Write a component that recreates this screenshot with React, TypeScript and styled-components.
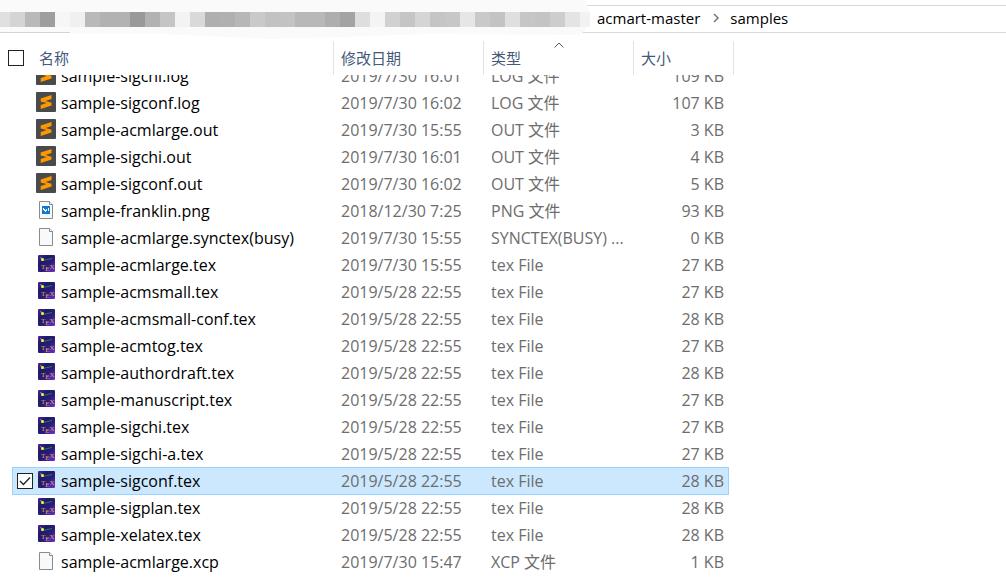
import React from "react";
import styled, { createGlobalStyle, css } from "styled-components";

const GlobalStyle = createGlobalStyle`
  * { box-sizing: border-box; }
  html, body, #root { height: 100%; }
  body {
    margin: 0;
    background: #fff;
    font-family: "Open Sans", "Noto Sans CJK SC", sans-serif;
    font-size: 15px;
    line-height: 20px;
    color: #000;
  }
`;

const Window = styled.main`
  height: 100vh;
  display: flex;
  flex-direction: column;
  overflow: hidden;
`;

const AddressBar = styled.nav`
  position: relative;
  flex: none;
  height: 28px;
  margin-top: 5px;
  display: flex;
  align-items: center;
  gap: 10px;
  padding: 0 0 2px 597px;
  border-top: 1px solid #d9d9d9;
  border-bottom: 1px solid #d9d9d9;
`;

const HiddenPath = styled.svg`
  position: absolute;
  left: 0;
  top: -6px;
`;

const Crumb = styled.a`
  color: #000;
  text-decoration: none;
`;

const FileTable = styled.table`
  flex: 1;
  min-height: 0;
  display: flex;
  flex-direction: column;
`;

const columns = css`
  display: grid;
  grid-template-columns: 322px 150px 150px 95px;
  margin-left: 12px;
`;

const Head = styled.thead`
  display: block;
  flex: none;
  padding-top: 8px;
`;

const HeadRow = styled.tr`
  ${columns}
  grid-template-columns: 322px 150px 150px 100px;
  height: 34px;
`;

const HeadCell = styled.th`
  position: relative;
  display: flex;
  align-items: center;
  padding: 0 0 0 7px;
  border-right: 1px solid #e2e2e2;
  color: #44597a;
  font-weight: 400;

  &:first-child {
    gap: 15px;
    padding-left: 0;
    margin-left: -4px;
  }
`;

const SortMark = styled.svg`
  position: absolute;
  left: 70px;
  top: 1px;
`;

const Body = styled.tbody`
  display: block;
  flex: 1;
  min-height: 0;
  overflow: hidden;
  font-size: 16px;

  tr:first-child { margin-top: -13px; }
`;

const Row = styled.tr<{ $selected: boolean }>`
  ${columns}
  width: 717px;
  height: 27px;
  ${(p) =>
    p.$selected &&
    css`
      background: #cce8ff;
      box-shadow: inset 1px 1px #99d1ff, inset -1px 0 #99d1ff, 0 1px #99d1ff;
    `}
`;

const Cell = styled.td<{ $right?: boolean }>`
  display: flex;
  align-items: center;
  justify-content: ${(p) => (p.$right ? "flex-end" : "flex-start")};
  padding: 0 5px 0 7px;
  color: #6d6d6d;
  white-space: nowrap;
`;

const NameCell = styled(Cell)`
  gap: 5px;
  padding: 0 0 0 5px;
  color: #000;
`;

const CheckSlot = styled.span`
  display: flex;
  width: 14px;
`;

const Check = styled.input`
  appearance: none;
  flex: none;
  width: 16px;
  height: 16px;
  margin: 0;
  border: 1px solid #222;
  background: #fff;

  &:checked {
    background: #fff
      url("data:image/svg+xml,%3Csvg xmlns='http://www.w3.org/2000/svg' viewBox='0 0 14 14'%3E%3Cpath d='M2 7l3.4 3.5L12 3.5' fill='none' stroke='%23222' stroke-width='1.3'/%3E%3C/svg%3E");
  }
`;

const Icon = styled.svg`
  flex: none;
  width: 20px;
  height: 21px;
  padding-bottom: 1px;
`;

type Kind = "sublime" | "image" | "page" | "tex";

const Sheet = () => (
  <>
    <path d="M3.5 1.5h10l3 3v14h-13z" fill="#f8f9f9" stroke="#8b8b8b" />
    <path d="M13.5 1.5v3h3" fill="#fff" stroke="#8b8b8b" />
  </>
);

const FileIcon = ({ kind }: { kind: Kind }) => (
  <Icon viewBox="0 0 20 20" aria-hidden="true">
    {kind === "sublime" && (
      <>
        <rect width="20" height="20" rx="1" fill="#4a4a4a" />
        <path d="M4.7 6.5 15.500 3v4L9.500 9l6 1.800v2.700L4.700 17v-4l6-2-6-1.600z" fill="#ff9800" />
      </>
    )}
    {kind === "page" && <Sheet />}
    {kind === "image" && (
      <>
        <Sheet />
        <rect x="6" y="6" width="8" height="8" fill="#0a78d4" />
        <path d="M7 8h1v1h1v1h1V9h1v1h1V8h1v3h-1v-1h-1v1h-1v1H9v-1H8v-1H7z" fill="#fff" />
      </>
    )}
    {kind === "tex" && (
      <>
        <defs>
          <linearGradient id="night" x1="0" y1="0" x2="1" y2="1">
            <stop offset="0" stopColor="#4a1fb4" />
            <stop offset="0.3" stopColor="#1f1a66" />
            <stop offset="0.6" stopColor="#2c1c7a" />
            <stop offset="1" stopColor="#6a34d4" />
          </linearGradient>
        </defs>
        <rect x="2" y="1" width="17" height="17" rx="1" fill="url(#night)" />
        <path d="M7 6.500 16 4.500" stroke="#267a63" />
        <path d="M4 3.500 7 5M5.500 7 7.500 4.500" stroke="#80b52b" />
        <circle cx="6.500" cy="5.500" r="1.500" fill="#eef04a" />
        <text x="5" y="15" fill="#e0a860" fontFamily="Liberation Serif, serif" fontSize="7">
          T<tspan dy="2">E</tspan><tspan dy="-2">X</tspan>
        </text>
      </>
    )}
  </Icon>
);

const D = "2019/5/28 22:55";
const files: [Kind, string, string, string, string][] = [
  ["sublime", "sample-sigchi.log", "2019/7/30 16:01", "LOG 文件", "109 KB"],
  ["sublime", "sample-sigconf.log", "2019/7/30 16:02", "LOG 文件", "107 KB"],
  ["sublime", "sample-acmlarge.out", "2019/7/30 15:55", "OUT 文件", "3 KB"],
  ["sublime", "sample-sigchi.out", "2019/7/30 16:01", "OUT 文件", "4 KB"],
  ["sublime", "sample-sigconf.out", "2019/7/30 16:02", "OUT 文件", "5 KB"],
  ["image", "sample-franklin.png", "2018/12/30 7:25", "PNG 文件", "93 KB"],
  ["page", "sample-acmlarge.synctex(busy)", "2019/7/30 15:55", "SYNCTEX(BUSY) ...", "0 KB"],
  ["tex", "sample-acmlarge.tex", "2019/7/30 15:55", "tex File", "27 KB"],
  ["tex", "sample-acmsmall.tex", D, "tex File", "27 KB"],
  ["tex", "sample-acmsmall-conf.tex", D, "tex File", "28 KB"],
  ["tex", "sample-acmtog.tex", D, "tex File", "27 KB"],
  ["tex", "sample-authordraft.tex", D, "tex File", "28 KB"],
  ["tex", "sample-manuscript.tex", D, "tex File", "27 KB"],
  ["tex", "sample-sigchi.tex", D, "tex File", "27 KB"],
  ["tex", "sample-sigchi-a.tex", D, "tex File", "27 KB"],
  ["tex", "sample-sigconf.tex", D, "tex File", "28 KB"],
  ["tex", "sample-sigplan.tex", D, "tex File", "28 KB"],
  ["tex", "sample-xelatex.tex", D, "tex File", "28 KB"],
  ["page", "sample-acmlarge.xcp", "2019/7/30 15:47", "XCP 文件", "1 KB"],
];

const mosaic =
  "e0 d4 b9 9e f6 f0 b9 b2 b2 99 b2 c5 f3 d9 af b0 b7 c9 c2 c3 b8 b8 ae a3 de f4 d1 c5 d5 c5 c7 e6 c9 c3 df c6 c4 cd e4 f2".split(" ");

export default function App() {
  return (
    <>
      <GlobalStyle />
      <Window>
        <AddressBar aria-label="Path">
          <HiddenPath width="592" height="40" aria-hidden="true">
            <path d="M0 0H584Q590 8 590 17Q590 30 578 35L430 34L340 37L270 39L160 34L70 34V32H0Z" fill="#fafafa" />
            <path d="M0 32.5H70" stroke="#d4d4d4" />
            {mosaic.map((c, i) => (
              <rect key={i} x={i * 15 - 5} y="12" width={i === mosaic.length - 1 ? 10 : 15} height="15" fill={`#${c}${c}${c}`} />
            ))}
          </HiddenPath>
          <Crumb href="#acmart-master">acmart-master</Crumb>
          <svg width="10" height="10" aria-hidden="true">
            <path d="M4 1l4 4-4 4" fill="none" stroke="#777" strokeWidth="1.5" />
          </svg>
          <Crumb href="#samples">samples</Crumb>
        </AddressBar>
        <FileTable cellSpacing={0}>
          <Head>
            <HeadRow>
              <HeadCell>
                <Check type="checkbox" aria-label="全选" />
                名称
              </HeadCell>
              <HeadCell>修改日期</HeadCell>
              <HeadCell aria-sort="ascending">
                类型
                <SortMark width="10" height="7" aria-hidden="true">
                  <path d="M.5 5.5 5 1l4.500 4.500" fill="none" stroke="#555" />
                </SortMark>
              </HeadCell>
              <HeadCell>大小</HeadCell>
            </HeadRow>
          </Head>
          <Body>
            {files.map(([kind, name, date, type, size]) => {
              const selected = name === "sample-sigconf.tex";
              return (
                <Row key={name} $selected={selected}>
                  <NameCell>
                    <CheckSlot>
                      {selected && <Check type="checkbox" defaultChecked aria-label={name} />}
                    </CheckSlot>
                    <FileIcon kind={kind} />
                    {name}
                  </NameCell>
                  <Cell>{date}</Cell>
                  <Cell>{type}</Cell>
                  <Cell $right>{size}</Cell>
                </Row>
              );
            })}
          </Body>
        </FileTable>
      </Window>
    </>
  );
}
